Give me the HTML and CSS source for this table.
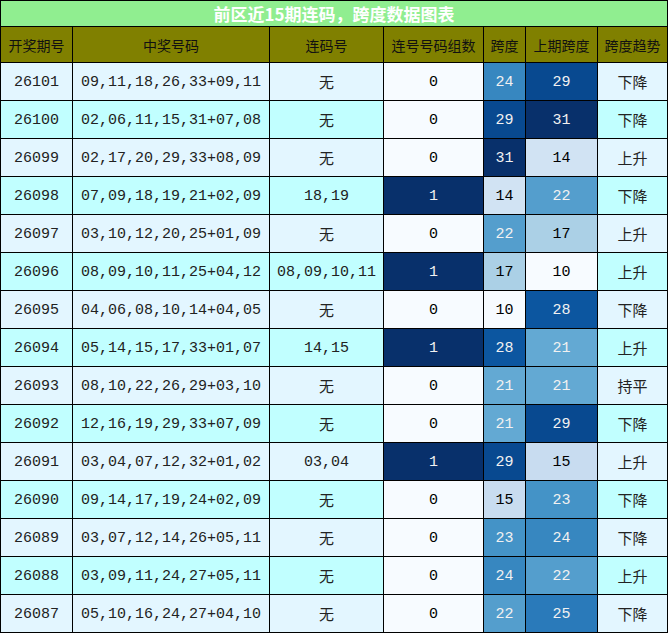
FILE: index.html
```html
<!DOCTYPE html>
<html lang="zh">
<head>
<meta charset="utf-8">
<title>前区近15期连码，跨度数据图表</title>
<link rel="stylesheet" href="styles.css">
</head>
<body>
<div class="sheet">
  <div class="title">前区近15期连码，跨度数据图表</div>
  <div class="row head">
    <div class="c">开奖期号</div><div class="c">中奖号码</div><div class="c">连码号</div><div class="c">连号号码组数</div><div class="c">跨度</div><div class="c">上期跨度</div><div class="c">跨度趋势</div>
  </div>
  <div class="row light"><div class="c">26101</div><div class="c">09,11,18,26,33+09,11</div><div class="c zh">无</div><div class="c g0">0</div><div class="c b24">24</div><div class="c b29">29</div><div class="c zh">下降</div></div>
  <div class="row cyan"><div class="c">26100</div><div class="c">02,06,11,15,31+07,08</div><div class="c zh">无</div><div class="c g0">0</div><div class="c b29">29</div><div class="c b31">31</div><div class="c zh">下降</div></div>
  <div class="row light"><div class="c">26099</div><div class="c">02,17,20,29,33+08,09</div><div class="c zh">无</div><div class="c g0">0</div><div class="c b31">31</div><div class="c b14">14</div><div class="c zh">上升</div></div>
  <div class="row cyan"><div class="c">26098</div><div class="c">07,09,18,19,21+02,09</div><div class="c">18,19</div><div class="c g1">1</div><div class="c b14">14</div><div class="c b22">22</div><div class="c zh">下降</div></div>
  <div class="row light"><div class="c">26097</div><div class="c">03,10,12,20,25+01,09</div><div class="c zh">无</div><div class="c g0">0</div><div class="c b22">22</div><div class="c b17">17</div><div class="c zh">上升</div></div>
  <div class="row cyan"><div class="c">26096</div><div class="c">08,09,10,11,25+04,12</div><div class="c">08,09,10,11</div><div class="c g1">1</div><div class="c b17">17</div><div class="c b10">10</div><div class="c zh">上升</div></div>
  <div class="row light"><div class="c">26095</div><div class="c">04,06,08,10,14+04,05</div><div class="c zh">无</div><div class="c g0">0</div><div class="c b10">10</div><div class="c b28">28</div><div class="c zh">下降</div></div>
  <div class="row cyan"><div class="c">26094</div><div class="c">05,14,15,17,33+01,07</div><div class="c">14,15</div><div class="c g1">1</div><div class="c b28">28</div><div class="c b21">21</div><div class="c zh">上升</div></div>
  <div class="row light"><div class="c">26093</div><div class="c">08,10,22,26,29+03,10</div><div class="c zh">无</div><div class="c g0">0</div><div class="c b21">21</div><div class="c b21">21</div><div class="c zh">持平</div></div>
  <div class="row cyan"><div class="c">26092</div><div class="c">12,16,19,29,33+07,09</div><div class="c zh">无</div><div class="c g0">0</div><div class="c b21">21</div><div class="c b29">29</div><div class="c zh">下降</div></div>
  <div class="row light"><div class="c">26091</div><div class="c">03,04,07,12,32+01,02</div><div class="c">03,04</div><div class="c g1">1</div><div class="c b29">29</div><div class="c b15">15</div><div class="c zh">上升</div></div>
  <div class="row cyan"><div class="c">26090</div><div class="c">09,14,17,19,24+02,09</div><div class="c zh">无</div><div class="c g0">0</div><div class="c b15">15</div><div class="c b23">23</div><div class="c zh">下降</div></div>
  <div class="row light"><div class="c">26089</div><div class="c">03,07,12,14,26+05,11</div><div class="c zh">无</div><div class="c g0">0</div><div class="c b23">23</div><div class="c b24">24</div><div class="c zh">下降</div></div>
  <div class="row cyan"><div class="c">26088</div><div class="c">03,09,11,24,27+05,11</div><div class="c zh">无</div><div class="c g0">0</div><div class="c b24">24</div><div class="c b22">22</div><div class="c zh">上升</div></div>
  <div class="row light"><div class="c">26087</div><div class="c">05,10,16,24,27+04,10</div><div class="c zh">无</div><div class="c g0">0</div><div class="c b22">22</div><div class="c b25">25</div><div class="c zh">下降</div></div>
</div>
</body>
</html>
```
FILE: styles.css
```css
html, body {
  margin: 0;
  padding: 0;
  background: #fff;
}

.sheet {
  width: 668px;
  box-sizing: border-box;
  display: grid;
  grid-template-columns: 71px 196px 113px 99px 41px 71px 69px;
  grid-template-rows: 25px 35px repeat(15, 37px);
  gap: 1px;
  padding: 1px;
  background: #000;
  font-family: "Liberation Mono", "Noto Sans CJK SC", monospace;
  font-size: 15px;
  color: #222;
}

.title {
  grid-column: 1 / -1;
  background: #90ee90;
  color: #fff;
  font-family: "Noto Sans CJK SC", sans-serif;
  font-weight: bold;
  font-size: 17px;
  display: flex;
  align-items: center;
  justify-content: center;
}

.row {
  display: contents;
}

.c {
  display: flex;
  align-items: center;
  justify-content: center;
  white-space: nowrap;
  padding-top: 1px;
  box-sizing: border-box;
}

.head .c {
  background: #808000;
  color: #111;
  font-family: "Noto Sans CJK SC", sans-serif;
  font-size: 14px;
  padding-top: 0;
}

.zh {
  font-family: "Noto Sans CJK SC", sans-serif;
}

.row .zh {
  padding-top: 0;
}

.light .c { background: #e3f6ff; }
.cyan .c { background: #c1ffff; }

.light .g0, .cyan .g0 { background: #f7fbff; color: #000; }
.light .g1, .cyan .g1 { background: #08306b; color: #f1f1f1; }

.row .b10 { background: #f7fbff; color: #000; }
.row .b14 { background: #d1e3f3; color: #000; }
.row .b15 { background: #c8dcf0; color: #000; }
.row .b17 { background: #abd0e6; color: #000; }
.row .b21 { background: #63a9d3; color: #f1f1f1; }
.row .b22 { background: #549ecd; color: #f1f1f1; }
.row .b23 { background: #4493c7; color: #f1f1f1; }
.row .b24 { background: #3787c0; color: #f1f1f1; }
.row .b25 { background: #2a7aba; color: #f1f1f1; }
.row .b28 { background: #0c56a0; color: #f1f1f1; }
.row .b29 { background: #084990; color: #f1f1f1; }
.row .b31 { background: #08306b; color: #f1f1f1; }
```
